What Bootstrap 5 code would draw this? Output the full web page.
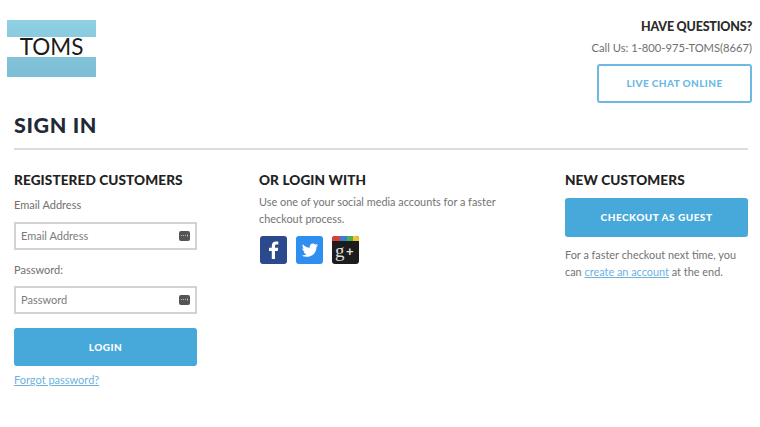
<!DOCTYPE html>
<html lang="en">
<head>
  <meta charset="UTF-8">
  <title>Sign In - TOMS</title>
  <link href="https://cdn.jsdelivr.net/npm/bootstrap@5.3.0/dist/css/bootstrap.min.css" rel="stylesheet">
  <style>
    body { font-family: Lato, "Open Sans", sans-serif; font-size: 11px; color: #747474; background: #fff; }
    .page-wrap { width: 760px; height: 427px; overflow: hidden; }
    .top-bar { padding: 17px 8px 0 7px; }
    .toms-logo { width: 89px; height: 57px; margin-top: 3px; background: linear-gradient(#8fd0e4, #7dbdd5); display: flex; align-items: center; }
    .toms-band { width: 100%; height: 20px; margin-bottom: 3px; background: #fff; color: #1c1c1c; font-size: 22.500px; font-weight: 400; line-height: 20px; text-align: center; }
    .have-q { font-size: 12.500px; font-weight: 900; color: #2b2b2b; line-height: 20px; letter-spacing: -.2px; }
    .call-us { font-size: 11.200px; color: #6f6f6f; line-height: 18px; margin-top: 2px; }
    .chat-btn { width: 155px; height: 39px; margin-top: 7px; border: 2px solid #6cb9e3; border-radius: 3px; color: #6cb9e3; background: #fff; font-size: 10px; font-weight: 900; letter-spacing: .4px; padding: 0; }
    .title-wrap { margin: 9px 12px 0 14px; border-bottom: 2px solid #dcdcdc; height: 38px; }
    .title-wrap h1 { font-size: 21.500px; font-weight: 900; color: #1f2a36; letter-spacing: .6px; line-height: 27px; margin: 0; }
    .cols { margin: 21px 0 0 14px; }
    .col-left { width: 183px; margin-right: 62px; }
    .col-mid { width: 245px; margin-right: 61px; }
    .col-right { width: 183px; }
    .sec-head { font-size: 13.600px; font-weight: 900; color: #222; line-height: 18px; margin: 0; letter-spacing: .1px; }
    .field-label { display: block; color: #6f6f6f; font-size: 11px; line-height: 14px; margin: 0; }
    .email-label { margin-top: 9px; }
    .pass-label { margin-top: 13px; }
    .field-box { height: 28px; border: 2px solid #d3d3d3; padding: 0 5px; margin-top: 10px; color: #7c7c7c; font-size: 11px; }
    .pass-box { margin-top: 9px; }
    .key-icon { display: block; }
    .blue-btn { display: block; background: #47a8da; color: #fff; border: 0; border-radius: 3px; width: 183px; font-weight: 900; font-size: 10px; letter-spacing: .5px; padding: 0; }
    .login-btn { height: 38px; margin-top: 14px; }
    .guest-btn { height: 39px; margin-top: 9px; }
    .blue-link { color: #6cb3de; }
    .forgot-link { display: inline-block; margin-top: 7px; line-height: 14px; }
    .mid-text { font-size: 10.900px; line-height: 16.500px; margin: 5px 0 0; }
    .guest-text { margin-top: 10px; }
    .social-row { margin: 9px 0 0 1px; gap: 9px; }
    .social-row svg { display: block; }
  </style>
</head>
<body>
  <div class="page-wrap">
    <div class="top-bar d-flex justify-content-between align-items-start">
      <div class="toms-logo"><div class="toms-band">TOMS</div></div>
      <div class="d-flex flex-column align-items-end">
        <div class="have-q">HAVE QUESTIONS?</div>
        <div class="call-us">Call Us: 1-800-975-TOMS(8667)</div>
        <button class="chat-btn">LIVE CHAT ONLINE</button>
      </div>
    </div>

    <div class="title-wrap"><h1>SIGN IN</h1></div>

    <div class="cols d-flex align-items-start">
      <!-- registered customers -->
      <div class="col-left">
        <h2 class="sec-head">REGISTERED CUSTOMERS</h2>
        <label class="field-label email-label">Email Address</label>
        <div class="field-box d-flex justify-content-between align-items-center">
          <span>Email Address</span>
          <svg class="key-icon" width="11" height="10" viewBox="0 0 11 10"><rect width="11" height="10" rx="2" fill="#555"/><path d="M2 4.500h1M4 4.500h1M6 4.500h1M8.500 3.500v2" stroke="#bbb" fill="none"/></svg>
        </div>
        <label class="field-label pass-label">Password:</label>
        <div class="field-box pass-box d-flex justify-content-between align-items-center">
          <span>Password</span>
          <svg class="key-icon" width="11" height="10" viewBox="0 0 11 10"><rect width="11" height="10" rx="2" fill="#555"/><path d="M2 4.500h1M4 4.500h1M6 4.500h1M8.500 3.500v2" stroke="#bbb" fill="none"/></svg>
        </div>
        <button class="blue-btn login-btn">LOGIN</button>
        <a href="#" class="blue-link forgot-link">Forgot password?</a>
      </div>

      <!-- social -->
      <div class="col-mid">
        <h2 class="sec-head">OR LOGIN WITH</h2>
        <p class="mid-text">Use one of your social media accounts for a faster checkout process.</p>
        <div class="social-row d-flex">
          <svg width="27" height="28" viewBox="0 0 27 28"><rect width="27" height="28" rx="3" fill="#2a4a8d"/><path d="M15 23v-8h2.800l.4-3.200H15V10c0-.9.3-1.500 1.600-1.500h1.700V5.600C18 5.500 17 5.500 15.900 5.500c-2.400 0-4.100 1.500-4.100 4.200v2.100H9V15h2.800v8z" fill="#fff"/></svg>
          <svg width="27" height="28" viewBox="0 0 27 28"><rect width="27" height="28" rx="3" fill="#2f8ff0"/><path d="M22 9c-.6.3-1.300.5-2 .6.7-.4 1.300-1.100 1.500-1.900-.7.4-1.400.7-2.200.8-1.400-1.400-3.700-1.300-4.900.2-.7.9-.9 2-.6 3-2.700-.1-5.200-1.400-6.900-3.500-.9 1.500-.4 3.500 1 4.500-.5 0-1-.2-1.500-.4 0 1.600 1.100 3 2.700 3.300-.5.1-1 .2-1.500.1.4 1.300 1.700 2.300 3.100 2.300-1.400 1.100-3.100 1.600-4.800 1.400 4.700 2.900 10.700 1.300 13.300-3.400.9-1.600 1.300-3.300 1.300-5.100.6-.5 1.100-1 1.500-1.900z" fill="#fff"/></svg>
          <svg width="27" height="28" viewBox="0 0 27 28">
            <rect width="27" height="28" rx="3" fill="#1c1c1c"/>
            <path d="M0 5V3a3 3 0 0 1 3-3h5v5z" fill="#d8413a"/><rect x="8" width="7" height="5" fill="#3e7ad6"/><rect x="15" width="6" height="5" fill="#4caf50"/><path d="M21 0h3a3 3 0 0 1 3 3v2h-6z" fill="#f2c230"/>
            <text x="3" y="21" font-family="Liberation Serif, serif" font-size="19" fill="#ddd">g</text>
            <text x="14" y="20" font-family="Liberation Sans, sans-serif" font-size="13" font-weight="700" fill="#ddd">+</text>
          </svg>
        </div>
      </div>

      <!-- guest -->
      <div class="col-right">
        <h2 class="sec-head">NEW CUSTOMERS</h2>
        <button class="blue-btn guest-btn">CHECKOUT AS GUEST</button>
        <p class="mid-text guest-text">For a faster checkout next time, you can <a href="#" class="blue-link">create an account</a> at the end.</p>
      </div>
    </div>
  </div>

  <script src="https://cdn.jsdelivr.net/npm/bootstrap@5.3.0/dist/js/bootstrap.bundle.min.js"></script>
</body>
</html>
